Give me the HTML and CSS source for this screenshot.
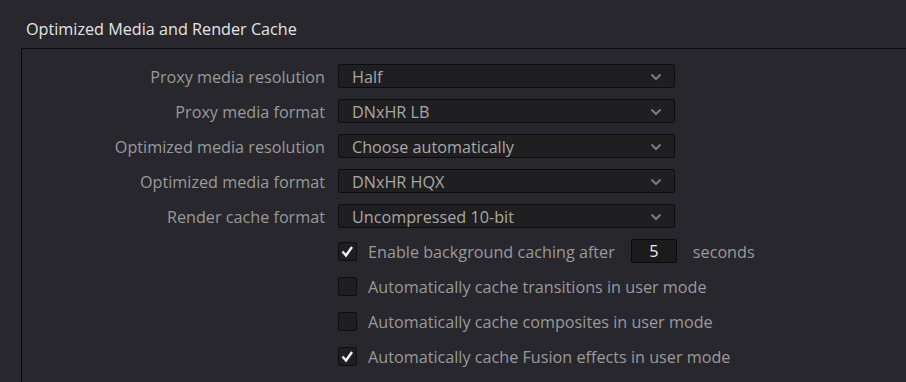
FILE: index.html
```html
<!DOCTYPE html>
<html>
<head>
  <title>Optimized Media and Render Cache</title>
  <link rel="stylesheet" href="styles.css">
</head>
<body>
  <h2 class="section-title">Optimized Media and Render Cache</h2>
  <div class="panel">
    <div class="form-grid">
      <label class="field-label">Proxy media resolution</label>
      <div class="dropdown"><span>Half</span><svg class="chevron" width="12" height="8" viewBox="0 0 12 8"><path d="M1.5 1.5 L6 6 L10.5 1.5" /></svg></div>

      <label class="field-label">Proxy media format</label>
      <div class="dropdown"><span>DNxHR LB</span><svg class="chevron" width="12" height="8" viewBox="0 0 12 8"><path d="M1.5 1.5 L6 6 L10.5 1.5" /></svg></div>

      <label class="field-label">Optimized media resolution</label>
      <div class="dropdown"><span>Choose automatically</span><svg class="chevron" width="12" height="8" viewBox="0 0 12 8"><path d="M1.5 1.5 L6 6 L10.5 1.5" /></svg></div>

      <label class="field-label">Optimized media format</label>
      <div class="dropdown"><span>DNxHR HQX</span><svg class="chevron" width="12" height="8" viewBox="0 0 12 8"><path d="M1.5 1.5 L6 6 L10.5 1.5" /></svg></div>

      <label class="field-label">Render cache format</label>
      <div class="dropdown"><span>Uncompressed 10-bit</span><svg class="chevron" width="12" height="8" viewBox="0 0 12 8"><path d="M1.5 1.5 L6 6 L10.5 1.5" /></svg></div>

      <div class="check-row">
        <span class="checkbox checked"><svg width="19" height="19" viewBox="0 0 19 19"><path d="M4.5 9.5 L8 13.5 L14 5" /></svg></span>
        <span class="check-text">Enable background caching after</span>
        <span class="number-box">5</span>
        <span class="check-text">seconds</span>
      </div>

      <div class="check-row">
        <span class="checkbox"></span>
        <span class="check-text">Automatically cache transitions in user mode</span>
      </div>

      <div class="check-row">
        <span class="checkbox"></span>
        <span class="check-text">Automatically cache composites in user mode</span>
      </div>

      <div class="check-row">
        <span class="checkbox checked"><svg width="19" height="19" viewBox="0 0 19 19"><path d="M4.5 9.5 L8 13.5 L14 5" /></svg></span>
        <span class="check-text">Automatically cache Fusion effects in user mode</span>
      </div>
    </div>
  </div>
</body>
</html>
```

FILE: styles.css
```css
body {
  font-family: "Open Sans", "Noto Sans", sans-serif;
  margin: 0;
  background-color: #28272d;
  overflow: hidden;
  height: 382px;
}

.section-title {
  margin: 0;
  padding: 18px 0 0 26px;
  height: 30px;
  font-size: 16.2px;
  font-weight: normal;
  line-height: 22px;
  color: #e4e4e4;
}

.panel {
  box-sizing: border-box;
  margin-left: 21px;
  height: calc(100vh - 48px);
  border-top: 1px solid #0c0c0e;
  border-left: 1px solid #0c0c0e;
  padding-top: 15px;
}

.form-grid {
  display: grid;
  grid-template-columns: 303px 337px;
  column-gap: 13px;
  row-gap: 11px;
  grid-auto-rows: 24px;
}

.field-label {
  text-align: right;
  font-size: 16.2px;
  line-height: 26px;
  color: #9a9a9a;
  white-space: nowrap;
}

.dropdown {
  display: flex;
  align-items: center;
  justify-content: space-between;
  box-sizing: border-box;
  height: 24px;
  padding: 1px 12px 0 13px;
  background-color: #1f1f21;
  border: 1px solid #0e0e10;
  border-radius: 2px;
  font-size: 16.2px;
  color: #a8a8a8;
}

.chevron path {
  fill: none;
  stroke: #7c7c7e;
  stroke-width: 2;
}

.check-row {
  grid-column: 2;
  display: flex;
  align-items: center;
  font-size: 16.2px;
  color: #9a9a9a;
  white-space: nowrap;
}

.check-text {
  padding-top: 1px;
}

.checkbox {
  flex: none;
  box-sizing: border-box;
  width: 19px;
  height: 19px;
  margin-right: 11px;
  background-color: #1f1f21;
  border: 1px solid #0e0e10;
  border-radius: 2px;
  position: relative;
}

.checkbox svg {
  position: absolute;
  left: -1px;
  top: -1px;
}

.checkbox path {
  fill: none;
  stroke: #f2f2f2;
  stroke-width: 2.4;
}

.number-box {
  flex: none;
  box-sizing: border-box;
  width: 46px;
  height: 24px;
  margin: 0 16px;
  background-color: #1b1b1d;
  border: 1px solid #0a0a0b;
  border-radius: 2px;
  text-align: center;
  line-height: 23px;
  color: #f0f0f0;
}
```
